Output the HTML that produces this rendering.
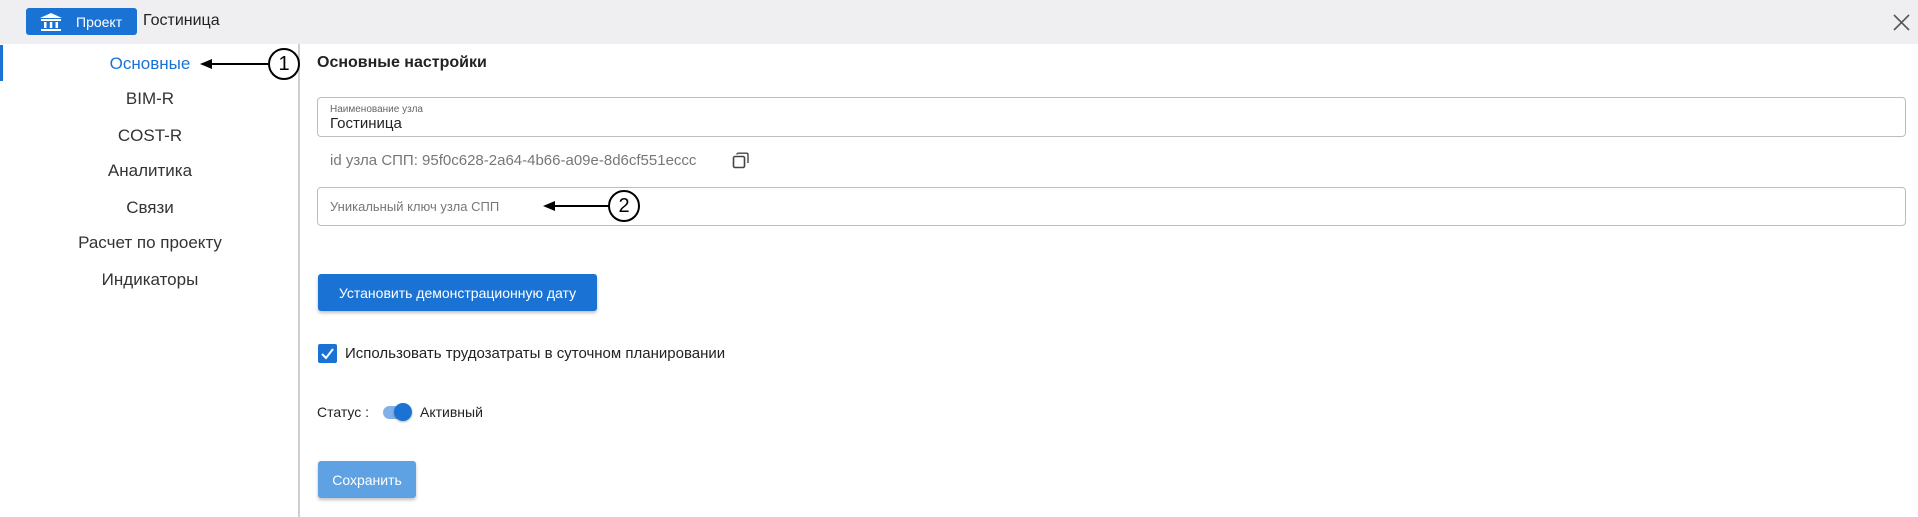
<!DOCTYPE html>
<html><head><meta charset="utf-8"><style>
*{box-sizing:border-box;margin:0;padding:0}
body{width:1918px;height:517px;overflow:hidden;background:#fff;font-family:"Liberation Sans","Noto Sans CJK SC",sans-serif;color:#222;position:relative}
.abs{position:absolute}
.hdr{left:0;top:0;width:1918px;height:44px;background:#efeff1}
.pbtn{left:26px;top:8px;width:111px;height:27px;background:#1a73d4;border-radius:3px;color:#fff;font-size:14px}
.side{left:0;top:44px;width:300px;height:473px;border-right:2px solid #cfcfcf}
.si{position:absolute;left:0;width:300px;text-align:center;font-size:17px;color:#333;transform:translateY(-50%)}
.inp{border:1px solid #bdbdbd;border-radius:4px;left:317px;width:1589px}
.btn{background:#1a73d4;color:#fff;border-radius:3px;font-size:14px;display:flex;align-items:center;justify-content:center;box-shadow:0 2px 3px rgba(0,0,0,.25)}
.circ{width:32px;height:32px;border:2px solid #000;border-radius:50%;font-size:20px;display:flex;align-items:center;justify-content:center;color:#000;background:#fff}
.arr{height:2px;background:#000}
.ah{width:0;height:0;border-top:5px solid transparent;border-bottom:5px solid transparent;border-right:12px solid #000}
</style></head><body>
<div class="abs hdr"></div>
<div class="abs pbtn">
<svg class="abs" style="left:13px;top:5px" width="24" height="18" viewBox="0 0 24 18"><path d="M12 0 L23 5 L1 5 Z" fill="#fff"/><rect x="2" y="6" width="20" height="2" fill="#fff"/><rect x="5" y="9" width="2.5" height="6" fill="#fff"/><rect x="10.8" y="9" width="2.5" height="6" fill="#fff"/><rect x="16.5" y="9" width="2.5" height="6" fill="#fff"/><rect x="2" y="16" width="20" height="2" fill="#fff"/></svg>
<span class="abs" style="left:50px;top:6px">Проект</span></div>
<div class="abs" style="left:143px;top:12px;font-size:16px;color:#222">Гостиница</div>
<svg class="abs" style="left:1893px;top:14px" width="17" height="17" viewBox="0 0 17 17"><path d="M1 1L16 16M16 1L1 16" stroke="#555" stroke-width="1.6"/></svg>
<div class="abs side"></div>
<div class="abs" style="left:0;top:45px;width:3px;height:36px;background:#1a73d4"></div>
<div class="si" style="top:64px;color:#1a73d4">Основные</div>
<div class="si" style="top:99px">BIM-R</div>
<div class="si" style="top:136px">COST-R</div>
<div class="si" style="top:171px">Аналитика</div>
<div class="si" style="top:208px">Связи</div>
<div class="si" style="top:243px">Расчет по проекту</div>
<div class="si" style="top:280px">Индикаторы</div>
<div class="abs ah" style="left:200px;top:59px"></div><div class="abs arr" style="left:210px;top:63px;width:58px"></div>
<div class="abs circ" style="left:268px;top:48px">1</div>
<div class="abs" style="left:317px;top:54px;font-size:16px;font-weight:bold;color:#222">Основные настройки</div>
<div class="abs inp" style="top:97px;height:40px"></div>
<div class="abs" style="left:330px;top:104px;font-size:10px;color:#666">Наименование узла</div>
<div class="abs" style="left:330px;top:115px;font-size:15px;color:#222">Гостиница</div>
<div class="abs" style="left:330px;top:152px;font-size:15px;color:#777">id узла СПП: 95f0c628-2a64-4b66-a09e-8d6cf551eccc</div>
<svg class="abs" style="left:732px;top:152px" width="18" height="18" viewBox="0 0 18 18"><rect x="1.5" y="4.5" width="11" height="11" rx="1.5" fill="none" stroke="#444" stroke-width="1.6"/><path d="M5 2.5 Q5 1.2 6.5 1.2 H14.5 Q16 1.2 16 2.7 V11" fill="none" stroke="#444" stroke-width="1.4"/></svg>
<div class="abs inp" style="top:187px;height:39px"></div>
<div class="abs" style="left:330px;top:199px;font-size:13px;color:#777">Уникальный ключ узла СПП</div>
<div class="abs ah" style="left:543px;top:201px"></div><div class="abs arr" style="left:553px;top:205px;width:56px"></div>
<div class="abs circ" style="left:608px;top:190px">2</div>
<div class="abs btn" style="left:318px;top:274px;width:279px;height:37px">Установить демонстрационную дату</div>
<div class="abs" style="left:318px;top:344px;width:19px;height:19px;background:#1a73d4;border-radius:2px"><svg width="19" height="19" viewBox="0 0 19 19"><path d="M4 10L8 14L15 5" fill="none" stroke="#fff" stroke-width="2"/></svg></div>
<div class="abs" style="left:345px;top:345px;font-size:15px;color:#222">Использовать трудозатраты в суточном планировании</div>
<div class="abs" style="left:317px;top:404px;font-size:14px;color:#222">Статус :</div>
<div class="abs" style="left:383px;top:406px;width:24px;height:13px;border-radius:7px;background:#7fb0e8"></div>
<div class="abs" style="left:394px;top:403px;width:18px;height:18px;border-radius:50%;background:#1a73d4;box-shadow:0 1px 2px rgba(0,0,0,.3)"></div>
<div class="abs" style="left:420px;top:404px;font-size:14px;color:#222">Активный</div>
<div class="abs btn" style="left:318px;top:461px;width:98px;height:37px;background:#5ea2e3">Сохранить</div>
</body></html>
